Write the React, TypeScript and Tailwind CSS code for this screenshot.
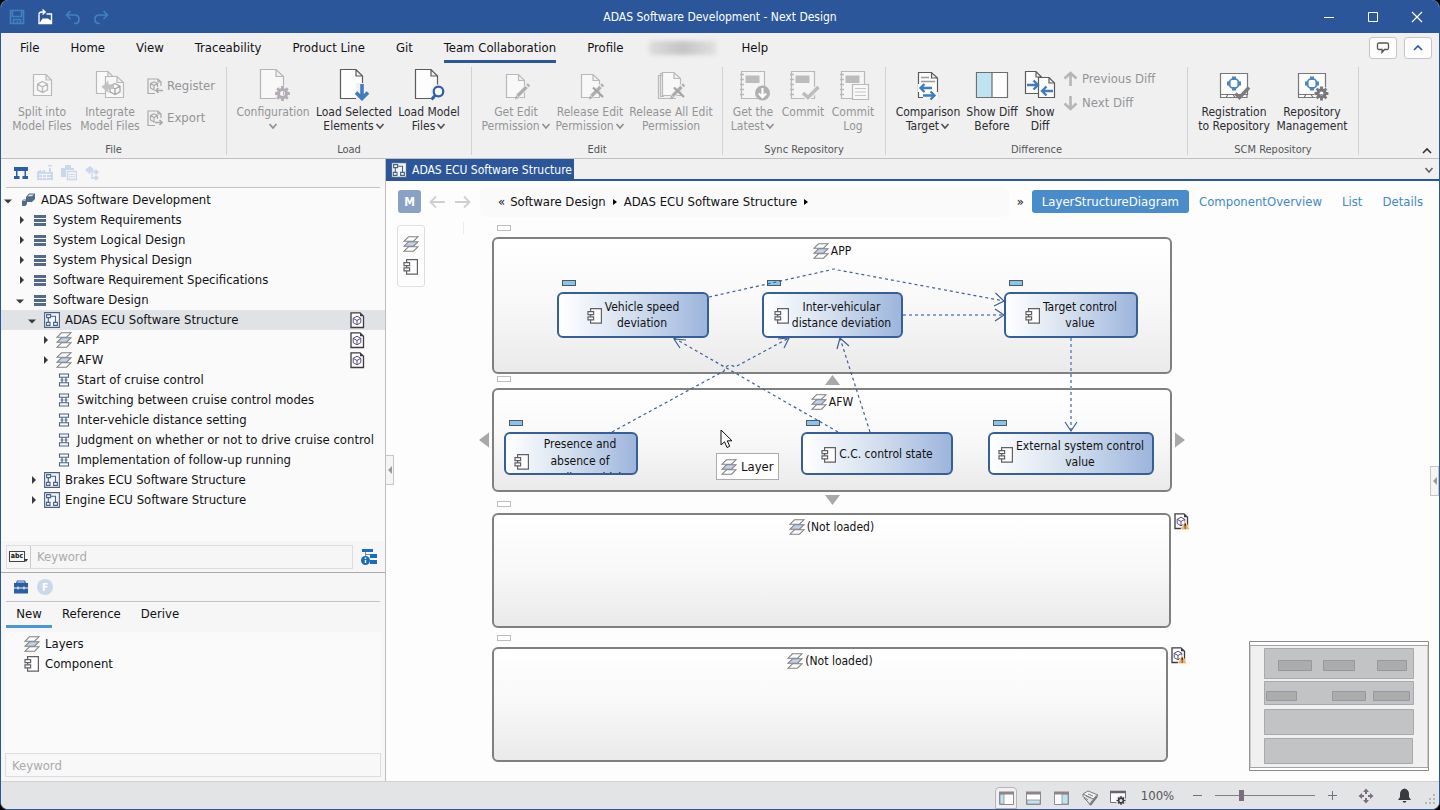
import type { ReactNode } from "react";

const INK = "#5a5a5a";
const DIM = "#b9b9bb";
const NAVY = "#2b579a";

/* ---------- small shared icons ---------- */

const Chevron = ({ color = "currentColor", up = false }: { color?: string; up?: boolean }) => (
    <svg width="10" height="8" viewBox="0 0 10 8" fill="none" stroke={color} strokeWidth="1.6" className="inline-block">
        <path d={up ? "M1 6 L5 2 L9 6" : "M1.5 2 L5 6 L8.5 2"} />
    </svg>
);

const DocCube = ({ color = "#3d3a40", cube = "#5b4a86", warn = false }: { color?: string; cube?: string; warn?: boolean }) => (
    <svg width="16" height="17" viewBox="0 0 16 17" fill="none" className="shrink-0">
        <path d="M1 .8 H10 L13.5 4.3 V15.5 H1 Z" fill="#fff" stroke={color} strokeWidth="1.3" />
        <path d="M10 .8 V4.3 H13.5 Z" fill={color} />
        <path d="M7 4.2 L10.8 6.3 V10.6 L7 12.8 L3.2 10.6 V6.3 Z M3.2 6.3 L7 8.5 L10.8 6.3 M7 8.5 V12.8" stroke={cube} strokeWidth="1" />
        {warn && (
            <g>
                <path d="M11.2 8 L15.8 16.6 H6.8 Z" fill="#f2ae58" stroke="#fff" strokeWidth=".6" />
                <path d="M11.2 10.5 V13.6 M11.2 14.4 V15.6" stroke="#222" strokeWidth="1.3" />
            </g>
        )}
    </svg>
);

const LayersIcon = () => (
    <svg width="16" height="16" viewBox="0 0 16 16" fill="#fff" stroke="#808084" strokeWidth="1.1" className="shrink-0">
        <path d="M5.5 10.8 H15 L10.5 15.2 H1 Z" />
        <path d="M5.5 5.8 H15 L10.5 10.2 H1 Z" fill="#c3d0ea" />
        <path d="M5.5 .8 H15 L10.5 5.2 H1 Z" />
    </svg>
);

const ComponentIcon = ({ color = "#606066" }: { color?: string }) => (
    <svg width="16" height="16" viewBox="0 0 16 16" fill="#fff" stroke={color} strokeWidth="1.2" className="shrink-0">
        <path d="M3.6 .7 H14.4 V15.2 H3.6 Z" />
        <path d="M1 3.6 H6.6 V6.6 H1 Z M1 8.8 H6.6 V11.8 H1 Z" />
    </svg>
);

const StructureIcon = () => (
    <svg width="16" height="16" viewBox="0 0 16 16" fill="none" stroke="#4a6282" strokeWidth="1.1" className="shrink-0">
        <path d="M.6 .6 H15.4 V15.4 H.6 Z" fill="#f4f7fa" />
        <path d="M2.6 2.6 H6.6 V5.6 H2.6 Z M2.4 10.4 H6 V13.4 H2.4 Z M9.6 10.4 H13.4 V13.4 H9.6 Z M4.3 5.6 V10.4 M6.6 4.2 H11.5 V10.4" />
    </svg>
);

const FolderIcon = () => (
    <svg width="16" height="16" viewBox="0 0 16 16" fill="#526b89" className="shrink-0">
        <path d="M2 3 H14 V6 H2 Z M2 7 H14 V10 H2 Z M2 11 H14 V14 H2 Z" />
    </svg>
);

const SequenceIcon = () => (
    <svg width="16" height="16" viewBox="0 0 16 16" fill="none" stroke="#4a6282" strokeWidth="1.1" className="shrink-0">
        <path d="M3.5 2 H12.5 V5.2 H3.5 Z M3.5 10.8 H12.5 V14 H3.5 Z M6 5.5 V10.5 M10 5.5 V10.5 M4.5 8 H7.5 M8.5 8 H11.5" />
    </svg>
);

const ProjectIcon = () => (
    <svg width="16" height="16" viewBox="0 0 16 16" className="shrink-0">
        <path d="M6 5 L9 1.5 H15 V7 L12 10 H6 Z" fill="#526b89" />
        <path d="M7.5 4.2 L9.6 2.4 H13.8 L12 4.2 Z" fill="#dde4ec" />
        <path d="M2 9 L3.5 7.5 H7 V12 L5.5 14 H2 Z" fill="#526b89" />
        <path d="M2.8 9 L3.8 8.2 H6 L5 9 Z" fill="#dde4ec" />
    </svg>
);

const Gear = ({ x, y, color, r = 5 }: { x: number; y: number; color: string; r?: number }) => (
    <g transform={`translate(${x} ${y})`}>
        <circle r={r} fill="none" stroke="#f0f0f0" strokeWidth="6" />
        <circle r={r - 1} fill="none" stroke={color} strokeWidth="3" />
        {[0, 45, 90, 135].map((a) => (
            <g key={a} transform={`rotate(${a})`}>
                <path d={`M0 ${-r - 2.4} V${-r + 1} M0 ${r - 1} V${r + 2.4}`} stroke={color} strokeWidth="2.8" />
            </g>
        ))}
    </g>
);

const CubeGlyph = ({ x, y, color }: { x: number; y: number; color: string }) => (
    <path
        transform={`translate(${x} ${y})`}
        d="M0 -5.5 L5 -2.8 V2.8 L0 5.5 L-5 2.8 V-2.8 Z M-5 -2.8 L0 0 L5 -2.8 M0 0 V5.5"
        fill="none"
        stroke={color}
        strokeWidth="1.4"
    />
);

/* ---------- ribbon icons, all on a 34px square ---------- */

const Ico = ({ children }: { children: ReactNode }) => (
    <svg width="34" height="34" viewBox="0 0 34 34" fill="none" strokeWidth="1.2" className="shrink-0">
        {children}
    </svg>
);

const SplitIcon = () => (
    <Ico>
        <path d="M8.5 7.5 H21 L26.5 13 V28.5 H8.5 Z M21 7.5 V13 H26.5" fill="#f8f8f8" stroke={DIM} />
        <CubeGlyph x={17.5} y={20} color={DIM} />
    </Ico>
);

const IntegrateIcon = () => (
    <Ico>
        <path d="M3.5 4.5 H15 L20.5 10 V26.5 H3.5 Z M15 4.5 V10 H20.5" fill="#f8f8f8" stroke={DIM} />
        <path d="M12.5 9.5 H24 L30.5 15.5 V30.5 H12.5 Z M24 9.5 V15.5 H30.5" fill="#f8f8f8" stroke={DIM} />
        <CubeGlyph x={22} y={22} color="#a9a9ab" />
        <path d="M8.5 20 L15.5 13.5 V17.5 H21 V22 H15.5 V26 Z" fill="#c2c2c4" />
    </Ico>
);

const ConfigIcon = () => (
    <Ico>
        <path d="M4.5 2.5 H20 L27.5 9.5 V31.5 H4.5 Z M20 2.5 V9.5 H27.5" fill="#f8f8f8" stroke="#b7b2ba" />
        <Gear x={26.5} y={26.5} color="#b2adb4" />
    </Ico>
);

const LoadSelectedIcon = () => (
    <Ico>
        <path d="M3.5 2.5 H19 L25.5 9 V31.5 H3.5 Z M19 2.5 V9 H25.5" fill="#fdfdfd" stroke={INK} />
        <path d="M19 16 H31 V33 H19 Z" fill="#f0f0f0" />
        <path d="M25 17 V31 M19 25.5 L25 31.5 L31 25.5" stroke="#3f7dbd" strokeWidth="3.6" />
    </Ico>
);

const LoadModelIcon = () => (
    <Ico>
        <path d="M3.5 2.5 H19 L25.5 9 V31.5 H3.5 Z M19 2.5 V9 H25.5" fill="#fdfdfd" stroke={INK} />
        <circle cx="26" cy="25" r="7.5" fill="#f0f0f0" />
        <circle cx="26.5" cy="24.5" r="4.8" fill="#f8f8f8" stroke="#2d5fa8" strokeWidth="2.2" />
        <path d="M23 28.5 L19.5 32.5" stroke="#2d5fa8" strokeWidth="2.8" />
    </Ico>
);

const Pen = () => (
    <g>
        <path d="M18 29.5 L30 17.5" stroke="#f0f0f0" strokeWidth="5" />
        <path d="M18.5 29 L30 17.5" stroke="#aeaeb0" strokeWidth="3.2" />
        <path d="M16 32.5 L17 28.5 L20 31 Z" fill="#aeaeb0" />
        <path d="M26.5 18 L30 21.5" stroke="#f0f0f0" />
    </g>
);

const GetEditIcon = () => (
    <Ico>
        <path d="M7.5 7.5 H19.5 L25.5 13.5 V30.5 H7.5 Z M19.5 7.5 V13.5 H25.5" fill="#f8f8f8" stroke={DIM} />
        <Pen />
    </Ico>
);

const ReleaseIcon = ({ stacked = false }: { stacked?: boolean }) => (
    <Ico>
        {stacked && <path d="M8 8.5 H4.5 V31.5 H22 M9 6.5 H6.5 V29.5 H10" stroke={DIM} />}
        <path
            d="M8.5 5.5 H20 L26.5 11.5 V28.5 H8.5 Z M20 5.5 V11.5 H26.5"
            fill="#f8f8f8"
            stroke={DIM}
            transform={stacked ? undefined : "translate(0 2)"}
        />
        <Pen />
        <path d="M20 20.5 L30 30" stroke="#a5a5a8" strokeWidth="2.4" />
    </Ico>
);

const Notebook = () => (
    <g>
        <path d="M5.5 4.5 H28.5 V31.5 H5.5 Z" fill="#f5f5f5" stroke={DIM} strokeWidth="1.2" />
        <path d="M9.5 8.5 H23.5 V16 H9.5 Z" fill="#bcbcbf" />
        <path d="M4 7.5 H8 M4 12.5 H8 M4 17.5 H8 M4 22.5 H8 M4 27.5 H8" stroke={DIM} strokeWidth="1.6" />
    </g>
);

const GetLatestIcon = () => (
    <Ico>
        <Notebook />
        <circle cx="26.5" cy="26" r="7.5" fill="#b0b0b2" />
        <path d="M26.5 21 V29 M22.8 26.5 L26.5 30.2 L30.2 26.5" stroke="#fff" strokeWidth="2.2" />
    </Ico>
);

const CommitIcon = () => (
    <Ico>
        <Notebook />
        <path d="M17 26 L22 30.5 L32.5 20" stroke="#f0f0f0" strokeWidth="6" />
        <path d="M17 26 L22 30.5 L32.5 20" stroke="#bcbcbe" strokeWidth="3.4" />
    </Ico>
);

const CommitLogIcon = () => (
    <Ico>
        <Notebook />
        <path d="M16.5 17.5 H32.5 V32.5 H16.5 Z" fill="#f8f8f8" stroke={DIM} />
        <path d="M19 21.5 H30 M19 25 H30 M19 28.5 H30" stroke="#c6c6c8" />
    </Ico>
);

const ComparisonIcon = () => (
    <Ico>
        <path d="M7.5 5.5 H20.5 L26.5 11 V30.5 H7.5 Z M20.5 5.5 V11 H26.5" fill="#fdfdfd" stroke={INK} />
        <path d="M10 10.5 H18 M10 14.5 H24" stroke="#9a9a9c" strokeWidth="1.6" />
        <path d="M7 17 H21 V25 H27 V32 H12 V25 H7 Z" fill="#fdfdfd" />
        <path d="M21 21 H9 M13.5 17 L9.5 21 L13.5 25 M12 28.5 H24 M19.5 24.5 L23.5 28.5 L19.5 32.5" stroke="#3f7dbd" strokeWidth="2.4" />
    </Ico>
);

const ShowBeforeIcon = () => (
    <Ico>
        <path d="M1.5 5.5 H32.5 V30.5 H1.5 Z" fill="#fdfdfd" stroke="#6e6e70" />
        <path d="M2 6 H17 V30 H2 Z" fill="#bfe3f2" />
        <path d="M17 5.5 V30.5" stroke="#6e6e70" />
    </Ico>
);

const ShowDiffIcon = () => (
    <Ico>
        <path d="M2.5 4.5 H13 L18.5 10 V26.5 H2.5 Z M13 4.5 V10 H18.5" fill="#fdfdfd" stroke={INK} />
        <path d="M15.5 10.5 H26 L31.5 16 V30.5 H15.5 Z M26 10.5 V16 H31.5" fill="#fdfdfd" stroke={INK} />
        <path d="M4 18 H14 M10.5 13.5 L15 18 L10.5 22.5" stroke="#3f7dbd" strokeWidth="2.4" />
        <path d="M30 24 H20 M23.5 19.5 L19 24 L23.5 28.5" stroke="#3f7dbd" strokeWidth="2.4" />
    </Ico>
);

const Repo = () => (
    <g>
        <path d="M3.5 6.5 H30.5 V27.5 H3.5 Z M4 27.5 H30 V30.5 H3.5 V27.5 M9 30.5 L11 27.5 H16 L18 30.5" fill="#fdfdfd" stroke="#77777a" />
        <circle cx="17" cy="16.5" r="4.8" stroke="#4a86c2" strokeWidth="1.8" />
        <path d="M15 9.5 H19 V13 H15 Z M15 20 H19 V23.5 H15 Z M10 14.5 H13.5 V18.5 H10 Z M20.5 14.5 H24 V18.5 H20.5 Z" fill="#4a86c2" />
    </g>
);

const RegistrationIcon = () => (
    <Ico>
        <Repo />
        <path d="M18.5 26.5 L22.5 30.5 L32 20.5" stroke="#7c7c7e" strokeWidth="3.4" />
    </Ico>
);

const ManagementIcon = () => (
    <Ico>
        <Repo />
        <Gear x={26.5} y={26.5} color="#777779" r={4.5} />
    </Ico>
);

/* ---------- title bar ---------- */

const TitleBar = () => (
    <header className="grid h-[33px] shrink-0 grid-cols-[1fr_auto_1fr] items-center bg-[#2b579a] text-white">
        <div className="flex items-center gap-3 pl-2">
            <button aria-label="Save" className="grid size-4 place-items-center">
                <svg width="16" height="16" viewBox="0 0 16 16" fill="none" stroke="#4181c0" strokeWidth="1.6">
                    <path d="M1.5 1.5 H14.5 V14.5 H1.5 Z M3.5 2 V7.5 H12.5 V2 M4.5 14 V10.5 H11.5 V14 M8.5 12 V14" />
                </svg>
            </button>
            <button aria-label="Open" className="grid size-4 place-items-center">
                <svg width="16" height="16" viewBox="0 0 16 16" fill="none" stroke="#fff" strokeWidth="1.4">
                    <path d="M2 5.5 V14.5 H14.5 V5 H9.5" />
                    <path d="M2 15 L5.5 9.5 H11 L14.5 12 V15 Z" fill="#fff" stroke="none" />
                    <path d="M2 5.5 Q2 3 5 3 H7.5 M5.5 .5 L8.2 3 L5.5 5.6" />
                </svg>
            </button>
            <button aria-label="Undo" className="grid size-4 place-items-center">
                <svg width="16" height="16" viewBox="0 0 16 16" fill="none" stroke="#4181c0" strokeWidth="1.7">
                    <path d="M5.5 2 L1.5 6 L5.5 10 M1.5 6 H9.5 Q14 6 14 10.2 Q14 14.5 10 14.5 H9" />
                </svg>
            </button>
            <button aria-label="Redo" className="grid size-4 place-items-center">
                <svg width="16" height="16" viewBox="0 0 16 16" fill="none" stroke="#4181c0" strokeWidth="1.7">
                    <path d="M10.5 2 L14.5 6 L10.5 10 M14.5 6 H6.5 Q2 6 2 10.2 Q2 14.5 6 14.5 H7" />
                </svg>
            </button>
        </div>
        <h1 className="text-xs">ADAS Software Development - Next Design</h1>
        <div className="flex justify-end">
            <button aria-label="Minimize" className="grid h-8 w-11 place-items-center">
                <svg width="12" height="12" stroke="#fff"><path d="M1 6.5 H11" /></svg>
            </button>
            <button aria-label="Maximize" className="grid h-8 w-11 place-items-center">
                <svg width="12" height="12" fill="none" stroke="#fff"><path d="M1.5 1.5 H10.5 V10.5 H1.5 Z" /></svg>
            </button>
            <button aria-label="Close" className="grid h-8 w-11 place-items-center">
                <svg width="12" height="12" stroke="#fff" strokeWidth="1.2"><path d="M1 1 L11 11 M11 1 L1 11" /></svg>
            </button>
        </div>
    </header>
);

/* ---------- ribbon ---------- */

const RibbonTab = ({ label, active = false }: { label: string; active?: boolean }) => (
    <button className={`h-[30px] text-[13px] whitespace-nowrap ${active ? "border-b-[3px] border-[#2b579a] pt-[3px]" : ""}`}>{label}</button>
);

const RibbonTabs = () => (
    <nav className="flex h-[30px] shrink-0 items-center gap-[31px] pr-[7px] pl-[19px]">
        <RibbonTab label="File" />
        <RibbonTab label="Home" />
        <RibbonTab label="View" />
        <RibbonTab label="Traceability" />
        <RibbonTab label="Product Line" />
        <RibbonTab label="Git" />
        <RibbonTab label="Team Collaboration" active />
        <RibbonTab label="Profile" />
        <span className="-mx-[6px] h-[14px] w-[68px] rounded-sm bg-gradient-to-r from-[#dddddd] via-[#c4c4c4] to-[#e2e2e2] blur-[2px]" />
        <RibbonTab label="Help" />
        <div className="ml-auto flex gap-[7px]">
            <button aria-label="Feedback" className="grid h-[22px] w-7 place-items-center rounded-[3px] border border-[#c6c6c6] bg-[#fdfdfd]">
                <svg width="14" height="12" viewBox="0 0 14 12" fill="none" stroke="#555" strokeWidth="1.3">
                    <path d="M3 1 H11 Q12.5 1 12.5 2.5 V6 Q12.5 7.5 11 7.5 H8.5 L6 10.5 V7.5 H3 Q1.5 7.5 1.5 6 V2.5 Q1.5 1 3 1 Z" />
                </svg>
            </button>
            <button aria-label="Hide ribbon" className="grid h-[22px] w-7 place-items-center rounded-[3px] border border-[#c6c6c6] bg-[#fdfdfd]">
                <Chevron up color={NAVY} />
            </button>
        </div>
    </nav>
);

type RibbonButtonProps = { icon: ReactNode; lines: string[]; width: string; dim?: boolean; menu?: boolean };

const RibbonButton = ({ icon, lines, width, dim = false, menu = false }: RibbonButtonProps) => (
    <button className={`flex shrink-0 flex-col items-center text-xs leading-[14px] whitespace-nowrap ${width} ${dim ? "text-[#949497]" : "text-[#2c2c30]"}`}>
        {icon}
        <span className="mt-1">{lines[0]}</span>
        <span className="flex h-[14px] items-center gap-px">
            {lines[1]}
            {menu && <Chevron color={dim ? "#8e8e91" : "#4f4f55"} />}
        </span>
    </button>
);

const RibbonGroup = ({ title, size, children }: { title: string; size: string; children: ReactNode }) => (
    <section className={`flex h-[88px] shrink-0 flex-col justify-between border-r border-[#d2d2d4] ${size}`}>
        <div className="flex">{children}</div>
        <h2 className="text-center text-[11px] leading-[10px] text-[#555558]">{title}</h2>
    </section>
);

const SideButton = ({ icon, label }: { icon: ReactNode; label: string }) => (
    <button className="flex h-6 items-center gap-1 text-[13px] whitespace-nowrap text-[#949497]">
        {icon}
        {label}
    </button>
);

const MiniDoc = ({ out = false }: { out?: boolean }) => (
    <svg width="16" height="17" viewBox="0 0 16 17" fill="none" stroke="#a9a9ab" strokeWidth="1.2">
        <path d="M14 8 V4 L11 1 H1 V15.5 H8 M11 1 V4 H14" />
        <path d="M7 3.8 L10.5 5.6 V9 M7 3.8 L3.5 5.6 V10 L7 12 V7.6 M3.5 5.6 L7 7.6 L10.5 5.6" />
        <path d={out ? "M8 12.5 H15 M12.5 10 L15 12.5 L12.5 15" : "M16 12.5 H9 M11.5 10 L9 12.5 L11.5 15"} strokeWidth="1.6" />
    </svg>
);

const DiffArrow = ({ down = false }: { down?: boolean }) => (
    <svg width="15" height="16" viewBox="0 0 15 16" fill="none" stroke="#b6b6b8" strokeWidth="2.6">
        <path d={down ? "M7.5 1 V14 M1.5 8.5 L7.5 14 L13.5 8.5" : "M7.5 15 V2 M1.5 7.5 L7.5 2 L13.5 7.5"} />
    </svg>
);

const Ribbon = () => (
    <div className="flex h-24 shrink-0 overflow-hidden border-b border-[#c0c0c2] pt-[4px]">
        <RibbonGroup title="File" size="w-[226px] px-[7px]">
            <RibbonButton width="w-[68px]" icon={<SplitIcon />} lines={["Split into", "Model Files"]} dim />
            <RibbonButton width="w-[68px]" icon={<IntegrateIcon />} lines={["Integrate", "Model Files"]} dim />
            <div className="flex flex-col gap-2 pt-[7px] pl-[3px]">
                <SideButton icon={<MiniDoc />} label="Register" />
                <SideButton icon={<MiniDoc out />} label="Export" />
            </div>
        </RibbonGroup>
        <RibbonGroup title="Load" size="w-[245px] px-[6px]">
            <RibbonButton width="w-[80px]" icon={<ConfigIcon />} lines={["Configuration", ""]} dim menu />
            <RibbonButton width="w-[82px]" icon={<LoadSelectedIcon />} lines={["Load Selected", "Elements"]} menu />
            <RibbonButton width="w-[68px]" icon={<LoadModelIcon />} lines={["Load Model", "Files"]} menu />
        </RibbonGroup>
        <RibbonGroup title="Edit" size="w-[251px] px-[7px]">
            <RibbonButton width="w-[74px]" icon={<GetEditIcon />} lines={["Get Edit", "Permission"]} dim menu />
            <RibbonButton width="w-[74px]" icon={<ReleaseIcon />} lines={["Release Edit", "Permission"]} dim menu />
            <RibbonButton width="w-[88px]" icon={<ReleaseIcon stacked />} lines={["Release All Edit", "Permission"]} dim />
        </RibbonGroup>
        <RibbonGroup title="Sync Repository" size="w-[163px] px-[5px]">
            <RibbonButton width="w-[50px]" icon={<GetLatestIcon />} lines={["Get the", "Latest"]} dim menu />
            <RibbonButton width="w-[50px]" icon={<CommitIcon />} lines={["Commit", ""]} dim />
            <RibbonButton width="w-[50px]" icon={<CommitLogIcon />} lines={["Commit", "Log"]} dim />
        </RibbonGroup>
        <RibbonGroup title="Difference" size="w-[302px] px-[8px]">
            <RibbonButton width="w-[68px]" icon={<ComparisonIcon />} lines={["Comparison", "Target"]} menu />
            <RibbonButton width="w-[60px]" icon={<ShowBeforeIcon />} lines={["Show Diff", "Before"]} />
            <RibbonButton width="w-[36px]" icon={<ShowDiffIcon />} lines={["Show", "Diff"]} />
            <div className="flex flex-col pl-[5px]">
                <SideButton icon={<DiffArrow />} label="Previous Diff" />
                <SideButton icon={<DiffArrow down />} label="Next Diff" />
            </div>
        </RibbonGroup>
        <RibbonGroup title="SCM Repository" size="w-[171px] px-[7px]">
            <RibbonButton width="w-[78px]" icon={<RegistrationIcon />} lines={["Registration", "to Repository"]} />
            <RibbonButton width="w-[78px]" icon={<ManagementIcon />} lines={["Repository", "Management"]} />
        </RibbonGroup>
        <button aria-label="Collapse ribbon" className="mt-auto mr-[7px] mb-[3px] ml-auto flex">
            <Chevron up color="#333" />
        </button>
    </div>
);

/* ---------- model navigator ---------- */

type TreeItem = { label: string; depth: number; open?: boolean; icon: ReactNode; selected?: boolean; doc?: boolean };

const tree: TreeItem[] = [
    { label: "ADAS Software Development", depth: 0, open: true, icon: <ProjectIcon /> },
    { label: "System Requirements", depth: 1, open: false, icon: <FolderIcon /> },
    { label: "System Logical Design", depth: 1, open: false, icon: <FolderIcon /> },
    { label: "System Physical Design", depth: 1, open: false, icon: <FolderIcon /> },
    { label: "Software Requirement Specifications", depth: 1, open: false, icon: <FolderIcon /> },
    { label: "Software Design", depth: 1, open: true, icon: <FolderIcon /> },
    { label: "ADAS ECU Software Structure", depth: 2, open: true, icon: <StructureIcon />, selected: true, doc: true },
    { label: "APP", depth: 3, open: false, icon: <LayersIcon />, doc: true },
    { label: "AFW", depth: 3, open: false, icon: <LayersIcon />, doc: true },
    { label: "Start of cruise control", depth: 3, icon: <SequenceIcon /> },
    { label: "Switching between cruise control modes", depth: 3, icon: <SequenceIcon /> },
    { label: "Inter-vehicle distance setting", depth: 3, icon: <SequenceIcon /> },
    { label: "Judgment on whether or not to drive cruise control", depth: 3, icon: <SequenceIcon /> },
    { label: "Implementation of follow-up running", depth: 3, icon: <SequenceIcon /> },
    { label: "Brakes ECU Software Structure", depth: 2, open: false, icon: <StructureIcon /> },
    { label: "Engine ECU Software Structure", depth: 2, open: false, icon: <StructureIcon /> },
];

const indents = ["pl-0", "pl-3", "pl-6", "pl-9"];

const TreeRow = ({ item }: { item: TreeItem }) => (
    <li className={`flex h-5 items-center ${indents[item.depth]} ${item.selected ? "bg-[#e0e3e6]" : ""}`}>
        <svg width="16" height="16" viewBox="0 0 16 16" fill="#3a3a3e" className="mr-[3px] shrink-0">
            {item.open === true && <path d="M3 7.5 H11 L7 11.5 Z" />}
            {item.open === false && <path d="M7 4 L11 8 L7 12 Z" />}
        </svg>
        {item.icon}
        <span className="ml-[5px] text-[13px] whitespace-nowrap">{item.label}</span>
        {item.doc && (
            <span className="mr-[19px] ml-auto">
                <DocCube />
            </span>
        )}
    </li>
);

const NavToolbar = () => (
    <div className="mx-[5px] flex h-[29px] shrink-0 items-center gap-2 border-b border-[#c3c3c5] pl-[7px]">
        <button aria-label="Model tree">
            <svg width="16" height="16" viewBox="0 0 16 16" fill="#2b5fa5">
                <path d="M1 2 H15 V6 H1 Z M1 11 H6.5 V14 H1 Z M9.5 11 H15 V14 H9.5 Z M3 6 H4.5 V11 H3 Z M11.5 6 H13 V11 H11.5 Z" />
            </svg>
        </button>
        <button aria-label="Product line">
            <svg width="16" height="16" viewBox="0 0 16 16" fill="#cbd8ea">
                <path d="M0 15 V7 L4 4.5 V7 L8 4.5 V7 H12 V3 H14 V7 H16 V15 Z M11 0 H15 V1.5 H11 Z" />
                <path d="M2 9.5 H14 M2 12.5 H14 M5.5 8.5 V14 M9.5 8.5 V14" stroke="#f6f6f6" />
            </svg>
        </button>
        <button aria-label="Profiles">
            <svg width="16" height="16" viewBox="0 0 16 16" fill="#cbd8ea">
                <path d="M4 0 H10 V3 H13 V5 H5 V12 H0 V3 H4 Z" />
                <path d="M6.5 6.5 H15.5 V14.5 H6.5 Z" fill="#f6f6f6" stroke="#cbd8ea" strokeWidth="1.4" />
                <path d="M8 9.5 H14 M8 11.8 H14" stroke="#cbd8ea" />
            </svg>
        </button>
        <button aria-label="Relations">
            <svg width="16" height="16" viewBox="0 0 16 16" fill="#cbd8ea">
                <path d="M0 5 L5 1 L8.5 4 L4.5 9 Z M11 4 L14 7 L11 10 L8.5 7 Z M11 10 L14 13 L11 15.5 L8.5 13 Z" />
                <path d="M5 5 L11 7 M7 6 V13 H10" fill="none" stroke="#cbd8ea" strokeWidth="1.4" />
            </svg>
        </button>
    </div>
);

const SearchRow = () => (
    <div className="flex h-[32px] shrink-0 items-center gap-2 border-b border-[#a9a9ab] bg-[#f6f6f6] pr-2 pl-[5px]">
        <div className="flex h-6 flex-1 items-center border border-[#dcdde0]">
            <button aria-label="Match text" className="flex h-[22px] w-6 shrink-0 items-center justify-center border-r border-[#c8c8ca]">
                <span className="border border-[#444] px-px text-[7px] leading-[9px] font-bold">abc</span>
                <svg width="4" height="3" viewBox="0 0 4 3" fill="#333" className="mt-2 -ml-px"><path d="M0 0 H4 L2 3 Z" /></svg>
            </button>
            <input aria-label="Search models" placeholder="Keyword" className="w-full bg-transparent px-[6px] text-[13px] outline-none placeholder:text-[#a9abad]" />
        </div>
        <button aria-label="Search options">
            <svg width="16" height="16" viewBox="0 0 16 16" fill="#1b6db5">
                <path d="M1 0 H12 V3 H1 Z M9 5 H16 V9 H9 Z M9 11 H16 V15 H9 Z" />
                <circle cx="4.5" cy="11.5" r="4.5" />
                <path d="M4.5 3 V7 M4.5 5.5 H9" stroke="#888" fill="none" />
                <path d="M4.5 8.5 V10 M4.5 11 V14" stroke="#fff" strokeWidth="1.4" />
            </svg>
        </button>
    </div>
);

const ToolboxPanel = () => (
    <div className="flex h-[208px] shrink-0 flex-col bg-[#f6f6f6]">
        <div className="mx-[5px] flex h-[29px] shrink-0 items-center gap-2 border-b border-[#c3c3c5] pl-[7px]">
            <button aria-label="Toolbox">
                <svg width="16" height="16" viewBox="0 0 16 16" fill="#2b5fa5">
                    <path d="M4 1.5 H12 L13 4 H15 V14.5 H1 V4 H3 Z" />
                    <path d="M1 9 H15" stroke="#f6f6f6" strokeWidth="1" />
                    <path d="M5 7.5 V10.5 M11 7.5 V10.5 M4.5 3 H11.5" stroke="#f6f6f6" strokeWidth="1.2" />
                </svg>
            </button>
            <button aria-label="Fields" className="grid size-4 place-items-center rounded-full bg-[#cbd8ea] text-[10px] font-bold text-white">F</button>
        </div>
        <div className="flex h-[26px] shrink-0 pl-[5px] text-[13px]">
            <button className="h-full w-[46px] border-b-[3px] border-[#4a99d6]">New</button>
            <button className="h-full px-2.5 pb-[3px]">Reference</button>
            <button className="h-full px-2.5 pb-[3px]">Derive</button>
        </div>
        <ul className="mx-[4px] mt-[4px] flex-1 bg-[#fafafa] pt-[2px] pl-[19px] text-[13px]">
            <li className="flex h-5 items-center gap-[5px]"><LayersIcon />Layers</li>
            <li className="flex h-5 items-center gap-[5px]"><ComponentIcon />Component</li>
        </ul>
        <input aria-label="Search toolbox" placeholder="Keyword" className="mx-[4px] mb-[4px] h-6 border border-[#dcdde0] bg-[#f8f8f8] px-[6px] text-[13px] outline-none placeholder:text-[#a9abad]" />
    </div>
);

const Navigator = () => (
    <aside className="flex w-[385px] shrink-0 flex-col border-r border-[#bdbdbf] bg-[#f6f6f6]">
        <NavToolbar />
        <ul className="flex-1 overflow-hidden bg-[#fafafa] pt-[2px]">
            {tree.map((item) => <TreeRow key={item.label} item={item} />)}
        </ul>
        <SearchRow />
        <ToolboxPanel />
    </aside>
);

/* ---------- editor ---------- */

const EditorTabs = () => (
    <div className="flex h-[22px] shrink-0 items-center justify-between border-b-2 border-[#2b579a]">
        <button className="flex h-full items-center gap-[5px] bg-[#2b579a] pt-0.5 pr-0.5 pl-[5px] text-xs whitespace-nowrap text-white">
            <StructureIcon />
            ADAS ECU Software Structure
        </button>
        <button aria-label="Open editors" className="mr-[5px]"><Chevron color="#66666a" /></button>
    </div>
);

const NavArrow = ({ d }: { d: string }) => (
    <svg width="17" height="14" viewBox="0 0 17 14" fill="none" stroke="#cfcfd1" strokeWidth="1.8"><path d={d} /></svg>
);

const RightMark = () => (
    <svg width="4" height="6" viewBox="0 0 4 6"><path d="M0 0 L4 3 L0 6 Z" /></svg>
);

const EditorHeader = () => (
    <div className="flex h-[41px] shrink-0 items-center pr-[6px] pl-3">
        <button className="grid size-[23px] place-items-center rounded-[3px] bg-[#8ba1c4] text-xs font-semibold text-white">M</button>
        <button aria-label="Back" className="ml-2"><NavArrow d="M16 7 H2 M7 1.5 L1.5 7 L7 12.5" /></button>
        <button aria-label="Forward" className="ml-2"><NavArrow d="M1 7 H15 M10 1.5 L15.5 7 L10 12.5" /></button>
        <nav className="ml-[9px] flex h-[30px] flex-1 items-center gap-[7px] rounded-md bg-[#fafafa] pl-[18px] text-[13px] whitespace-nowrap">
            <span>«</span>
            <a href="#design" className="-ml-0.5">Software Design</a>
            <RightMark />
            <a href="#structure">ADAS ECU Software Structure</a>
            <RightMark />
        </nav>
        <span className="mx-[8px] text-[13px]">»</span>
        <div className="flex items-center text-[13px] whitespace-nowrap text-[#4189c7]">
            <button className="h-[23px] rounded-[3px] bg-[#4a8cc9] px-[10px] text-white">LayerStructureDiagram</button>
            <button className="px-[10px]">ComponentOverview</button>
            <button className="px-[10px]">List</button>
            <button className="px-[10px]">Details</button>
        </div>
    </div>
);

type LayerProps = { label: string; left: number; top: number; width: number; height: number; warn?: boolean };

const layers: LayerProps[] = [
    { label: "APP", left: 106, top: 15, width: 680, height: 137 },
    { label: "AFW", left: 106, top: 166, width: 680, height: 104 },
    { label: "(Not loaded)", left: 106, top: 291, width: 679, height: 115, warn: true },
    { label: "(Not loaded)", left: 106, top: 425, width: 676, height: 115, warn: true },
];

const Layer = ({ label, left, top, width, height, warn }: LayerProps) => (
    <div
        className="absolute rounded-md border-2 border-[#808080] bg-gradient-to-b from-white via-[#f8f8f8] to-[#eaeaea]"
        style={{ left, top, width, height }}
    >
        <span className="absolute -top-[14px] left-[3px] h-[6px] w-[14px] border border-[#bdbdbf] bg-white" />
        <p className="flex items-center justify-center gap-[2px] pt-[4px] text-xs leading-4">
            <LayersIcon />
            {label}
        </p>
        {warn && (
            <span className="absolute -top-[2px] left-full ml-[5px]">
                <DocCube warn />
            </span>
        )}
    </div>
);

type NodeProps = { text: string[]; left: number; top: number; width: number; height: number };

const nodes: NodeProps[] = [
    { text: ["Vehicle speed", "deviation"], left: 171, top: 70, width: 152, height: 46 },
    { text: ["Inter-vehicular", "distance deviation"], left: 376, top: 70, width: 141, height: 46 },
    { text: ["Target control", "value"], left: 618, top: 70, width: 134, height: 46 },
    { text: ["Presence and", "absence of", "preceding vehicle"], left: 118, top: 210, width: 134, height: 43 },
    { text: ["C.C. control state"], left: 415, top: 210, width: 152, height: 43 },
    { text: ["External system control", "value"], left: 602, top: 210, width: 166, height: 43 },
];

const DiagramNode = ({ text, left, top, width, height }: NodeProps) => (
    <>
        <span
            className="absolute h-[6px] w-[14px] border border-[#55565a] bg-[#86c5f0]"
            style={{ left: left + 5, top: top - 12 }}
        />
        <div
            className={`absolute flex justify-center gap-[2px] overflow-hidden rounded-md border-2 border-[#365f97] bg-gradient-to-r from-white via-[#d3dfee] to-[#9db5dc] text-center text-xs ${text.length > 2 ? "items-start pt-[2px] leading-[17px]" : "items-center leading-4"}`}
            style={{ left, top, width, height }}
        >
            <span className={text.length > 2 ? "pt-[18px]" : "pt-[2px]"}>
                <ComponentIcon />
            </span>
            <p className="whitespace-nowrap">
                {text.map((line) => <span key={line} className="block">{line}</span>)}
            </p>
        </div>
    </>
);

const Links = () => (
    <svg width="800" height="300" viewBox="0 0 800 300" fill="none" stroke="#3c6099" className="pointer-events-none absolute top-0 left-0">
        <g strokeDasharray="3 3" strokeWidth="1.2">
            <path d="M323 75 L444 48 Q448 46 452 48 L618 79" />
            <path d="M226 210 L338 149 Q341 140 349 145 L403 116" />
            <path d="M452 210 L288 116" />
            <path d="M484 210 L454 116" />
        </g>
        <g strokeDasharray="3 3" strokeWidth="2" stroke="#85a0cb">
            <path d="M517 93 H618" />
            <path d="M685 116 V210" />
        </g>
        <path
            strokeWidth="1.2"
            d="M608 84 L618 79 L609.5 71 M609 99 L618 93 L609 87 M679 200 L685 209 L691 200 M392 117 L403 116 L398 126 M294 126 L288 117 L300 118 M451 127 L454 116 L463 124"
        />
    </svg>
);

const Mover = ({ d, place }: { d: string; place: string }) => (
    <svg width="16" height="16" viewBox="0 0 16 16" fill="#a8a8aa" className={`absolute ${place}`}><path d={d} /></svg>
);

const Palette = () => (
    <div className="absolute top-[3px] left-[11px] flex h-[62px] w-7 flex-col items-center gap-[7px] rounded-[3px] border border-[#dededf] bg-[#fdfdfd] pt-[10px]">
        <button aria-label="Add layer"><LayersIcon /></button>
        <button aria-label="Add component"><ComponentIcon /></button>
    </div>
);

const MiniMap = () => (
    <svg width="180" height="130" viewBox="0 0 180 130" className="absolute right-[10px] bottom-[10px]">
        <path d="M.5 .5 H179.5 V129.5 H.5 Z" fill="#fff" stroke="#8a8a8c" />
        <path d="M1 4.5 H179 V126.5 H1 Z" fill="#f0f0f0" stroke="#a4a4a6" />
        <g fill="#c2c3c4" stroke="#a9a9ab">
            <path d="M15.5 7.5 H164.5 V37.5 H15.5 Z M15.5 40.5 H164.5 V63.5 H15.5 Z M15.5 68.5 H164.5 V93.5 H15.5 Z M15.5 97.5 H163.5 V122.5 H15.5 Z" />
            <path
                fill="#acacac"
                stroke="#97989f"
                d="M29.5 19.5 H62.5 V29.5 H29.5 Z M74.5 19.5 H105.5 V29.5 H74.5 Z M128.5 19.5 H157.5 V29.5 H128.5 Z M17.5 50.5 H47.5 V59.5 H17.5 Z M83.5 50.5 H116.5 V59.5 H83.5 Z M124.5 50.5 H160.5 V59.5 H124.5 Z"
            />
        </g>
    </svg>
);

const EdgeHandle = ({ place }: { place: string }) => (
    <button aria-label="Toggle panel" className={`absolute grid h-[30px] w-[9px] place-items-center border border-[#c6c6c8] bg-[#f5f5f5] ${place}`}>
        <svg width="4" height="8" viewBox="0 0 4 8" fill="#9a9a9c"><path d="M4 0 V8 L0 4 Z" /></svg>
    </button>
);

const Canvas = () => (
    <div className="relative min-h-0 flex-1 overflow-hidden">
        <Palette />
        <span className="absolute top-0 left-[77px] h-3 w-px bg-[#ebebec]" />
        {layers.map((layer) => <Layer key={layer.top} {...layer} />)}
        {nodes.map((node) => <DiagramNode key={node.left} {...node} />)}
        <Links />
        <Mover place="top-[150px] left-[438px]" d="M8.5 3 L16 13 H1 Z" />
        <Mover place="top-[270px] left-[438px]" d="M8.5 13 L16 3 H1 Z" />
        <Mover place="top-[210px] left-[90px]" d="M3 8 L13 .5 V15.5 Z" />
        <Mover place="top-[210px] left-[786px]" d="M13 8 L3 .5 V15.5 Z" />

        {/* tool being dropped */}
        <svg width="14" height="20" viewBox="0 0 14 20" className="absolute top-[207px] left-[334px]">
            <path d="M1 1 V16 L4.5 12.8 L7 18.5 L9.7 17.3 L7.3 11.8 H12 Z" fill="#fff" stroke="#111" />
        </svg>
        <div className="absolute top-[231px] left-[330px] flex h-[27px] items-center gap-1 border border-[#ababad] bg-white px-1 text-[13px]">
            <LayersIcon />
            Layer
        </div>

        <MiniMap />
        <EdgeHandle place="top-[233px] -left-px" />
        <EdgeHandle place="top-[244px] right-0" />
    </div>
);

/* ---------- status bar ---------- */

const PaneIcon = ({ d }: { d: string }) => (
    <svg width="15" height="14" viewBox="0 0 15 14" fill="none">
        <path d="M.5 1.5 H14.5 V13.5 H.5 Z" fill="#fdfdfd" />
        <path d={d} fill="#bfe3f2" stroke="#8f8a8e" strokeWidth=".8" />
        <path d="M.5 2.5 H14.5 V13.5 H.5 Z" stroke="#8f8a8e" />
        <path d="M0 2 H15" stroke="#8f8488" strokeWidth="3" />
    </svg>
);

const StatusBar = () => (
    <footer className="flex h-7 shrink-0 items-center justify-end border-t border-[#d0d1d3] bg-[#e2e4e6] pr-0.5">
        <button aria-label="Left pane" className="mt-1 grid h-[22px] w-[22px] place-items-center rounded-t-sm border border-[#b9b3b8] bg-[#f0f0f0]">
            <PaneIcon d="M1 3 H5 V13 H1 Z" />
        </button>
        <button aria-label="Bottom pane" className="ml-[9px] pt-1"><PaneIcon d="M1 9 H14 V13 H1 Z" /></button>
        <button aria-label="Right pane" className="ml-[13px] pt-1"><PaneIcon d="M8 3 H14 V13 H8 Z" /></button>
        <button aria-label="Check model" className="ml-[13px] pt-1">
            <svg width="17" height="16" viewBox="0 0 17 16" fill="#f4f4f4" stroke="#7d7d80">
                <path d="M1 4 L6 1 L16 5 L11 9 Z M1 4 V6.5 L6 10 M2 8 L6 12 L8 15 M6 4 L11 6 M4 6 L9 8" />
                <path d="M8 15 L15 6" strokeWidth="2.4" />
            </svg>
        </button>
        <button aria-label="Screen settings" className="ml-[11px] pt-1">
            <svg width="17" height="16" viewBox="0 0 17 16" fill="none">
                <path d="M.5 1.5 H15.5 V12.5 H.5 Z" fill="#fdfdfd" stroke="#77707a" />
                <path d="M0 2 H16" stroke="#6d6270" strokeWidth="2.5" />
                <circle cx="11" cy="10.5" r="5" fill="#e2e4e6" />
                <circle cx="11" cy="10.5" r="2.4" stroke="#3e3a42" strokeWidth="1.6" />
                <path d="M11 6 V15 M6.5 10.5 H15.5 M8 7.5 L14 13.5 M14 7.5 L8 13.5" stroke="#3e3a42" strokeWidth="1.2" strokeDasharray="2 5 2" />
            </svg>
        </button>
        <span className="w-[61px] text-center text-[13px] text-[#55555a]">100%</span>
        <button aria-label="Zoom out" className="ml-1">
            <svg width="11" height="11" stroke="#7b6c80"><path d="M1 5.5 H10" /></svg>
        </button>
        <input
            type="range"
            aria-label="Zoom"
            defaultValue={25}
            className="mx-3 h-4 w-[100px] appearance-none bg-transparent [&::-webkit-slider-runnable-track]:h-px [&::-webkit-slider-runnable-track]:bg-[#7f7f82] [&::-webkit-slider-thumb]:-mt-[5px] [&::-webkit-slider-thumb]:h-[11px] [&::-webkit-slider-thumb]:w-[5px] [&::-webkit-slider-thumb]:appearance-none [&::-webkit-slider-thumb]:bg-[#7b6c80]"
        />
        <button aria-label="Zoom in">
            <svg width="11" height="11" stroke="#7b6c80"><path d="M1 5.5 H10 M5.5 1 V10" /></svg>
        </button>
        <button aria-label="Fit to window" className="ml-[20px]">
            <svg width="16" height="16" viewBox="0 0 16 16" fill="#7b6c80">
                <path d="M8 .5 L11 4 H9 V6 H7 V4 H5 Z M8 15.5 L11 12 H9 V10 H7 V12 H5 Z M.5 8 L4 5 V7 H6 V9 H4 V11 Z M15.5 8 L12 5 V7 H10 V9 H12 V11 Z" />
            </svg>
        </button>
        <button aria-label="Notifications" className="ml-[23px]">
            <svg width="15" height="15" viewBox="0 0 15 15" fill="#3a3a3e">
                <path d="M7.5 .5 Q12 1.5 12 6 V9 L14 12 H1 L3 9 V6 Q3 1.5 7.5 .5 Z M5.5 13 H9.5 Q9 14.8 7.5 14.8 Q6 14.8 5.5 13 Z" />
            </svg>
        </button>
        <svg width="12" height="12" viewBox="0 0 12 12" fill="#b5b6b8" className="mt-2 ml-[13px]">
            <path d="M8 0 H10 V2 H8 Z M4 4 H6 V6 H4 Z M8 4 H10 V6 H8 Z M0 8 H2 V10 H0 Z M4 8 H6 V10 H4 Z M8 8 H10 V10 H8 Z" />
        </svg>
    </footer>
);

const App = () => {
    return (
        <div className="h-screen bg-black font-['DejaVu_Sans_Condensed','Noto_Sans',sans-serif] text-[#111114]">
            <div className="flex h-full flex-col overflow-hidden rounded-lg border-x border-b border-[#2b579a] bg-[#f0f0f0]">
                <TitleBar />
                <RibbonTabs />
                <Ribbon />
                <div className="flex min-h-0 flex-1">
                    <Navigator />
                    <main className="flex min-w-0 flex-1 flex-col">
                        <EditorTabs />
                        <div className="flex min-h-0 flex-1 flex-col bg-[#fdfdfd]">
                            <EditorHeader />
                            <Canvas />
                        </div>
                    </main>
                </div>
                <StatusBar />
            </div>
        </div>
    );
};

export default App;
